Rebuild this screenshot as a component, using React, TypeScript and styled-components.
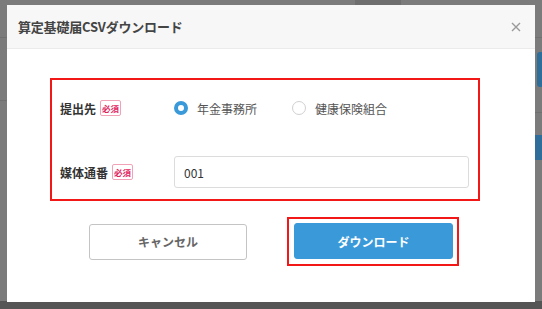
import React from "react";
import styled, { createGlobalStyle } from "styled-components";

const Global = createGlobalStyle`
  html, body { margin: 0; padding: 0; }
  body { font-family: "Noto Sans CJK JP", "Noto Sans", sans-serif; }
  * { box-sizing: border-box; }
`;

const Screen = styled.div`
  position: relative;
  width: 542px;
  height: 309px;
  overflow: hidden;
  background: #7b7b7b;
  padding: 5px 7px 0 7px;
`;

const Deco = styled.div<{ $bg: string }>`
  position: absolute;
  background: ${(p) => p.$bg};
`;

const BottomStrip = styled.div`
  position: absolute;
  left: 0;
  right: 0;
  bottom: 0;
  height: 8px;
  background: #555;
`;

const Modal = styled.div`
  position: relative;
  width: 528px;
  height: 297px;
  background: #fff;
  display: flex;
  flex-direction: column;
`;

const Header = styled.div`
  height: 44px;
  flex: none;
  background: #f7f7f7;
  border-bottom: 1px solid #ebebeb;
  display: flex;
  align-items: center;
  justify-content: space-between;
  padding: 0 14px 0 11px;
`;

const Title = styled.h2`
  margin: 0;
  font-size: 13px;
  font-weight: 700;
  color: #444;
  letter-spacing: -0.2px;
`;

const Close = styled.button`
  border: 0;
  background: none;
  padding: 0;
  width: 10px;
  height: 10px;
  display: flex;
  cursor: pointer;
`;

const Body = styled.div`
  padding: 29px 0 0 43px;
  display: flex;
  flex-direction: column;
`;

const FormBox = styled.div`
  width: 430px;
  border: 2px solid #f21818;
  padding: 12px 9px 11px 8px;
  display: flex;
  flex-direction: column;
  gap: 32px;
`;

const Row = styled.div`
  display: flex;
  align-items: center;
  height: 32px;
`;

const LabelCell = styled.div`
  width: 114px;
  display: flex;
  align-items: center;
  gap: 4px;
`;

const Label = styled.span`
  font-size: 12px;
  font-weight: 700;
  color: #333;
`;

const Badge = styled.span`
  width: 21px;
  height: 16px;
  border: 1px solid #f1a2b6;
  border-radius: 2px;
  color: #e0245e;
  font-size: 8.5px;
  font-weight: 700;
  display: inline-flex;
  align-items: center;
  justify-content: center;
  line-height: 1;
`;

const RadioGroup = styled.div`
  display: flex;
  align-items: center;
  gap: 35px;
`;

const RadioItem = styled.label`
  display: flex;
  align-items: center;
  gap: 9px;
  font-size: 12px;
  color: #555;
  cursor: pointer;
`;

const RadioDot = styled.span<{ $checked?: boolean }>`
  width: 14px;
  height: 14px;
  border-radius: 50%;
  background: #fff;
  border: ${(p) => (p.$checked ? "4px solid #3a9ad9" : "1px solid #d0d0d0")};
`;

const Input = styled.input`
  width: 295px;
  height: 32px;
  border: 1px solid #dcdcdc;
  border-radius: 3px;
  padding: 0 9px;
  font-family: "Noto Sans CJK JP", "Noto Sans", sans-serif;
  font-size: 12px;
  color: #333;
  outline: none;
`;

const Actions = styled.div`
  margin-top: 16px;
  margin-left: 39px;
  display: flex;
  align-items: center;
  gap: 40px;
`;

const Button = styled.button<{ $primary?: boolean }>`
  height: 36px;
  width: ${(p) => (p.$primary ? "159px" : "158px")};
  border-radius: 3px;
  font-family: "Noto Sans CJK JP", "Noto Sans", sans-serif;
  font-size: 12px;
  font-weight: 700;
  cursor: pointer;
  border: ${(p) => (p.$primary ? "1px solid #3a9ad9" : "1px solid #c4c4c4")};
  background: ${(p) => (p.$primary ? "#3a9ad9" : "#fff")};
  color: ${(p) => (p.$primary ? "#fff" : "#666")};
`;

const Highlight = styled.div`
  border: 2px solid #f21818;
  padding: 4px 4px 5px 5px;
  display: flex;
`;

export default function App() {
  return (
    <Screen>
      <Global />
      <Deco $bg="#6e6e6e" style={{ left: 355, top: 0, width: 46, height: 5 }} />
      <Deco $bg="#2f6d9b" style={{ left: 537, top: 52, width: 8, height: 35, borderRadius: 3 }} />
      <Deco $bg="#2f6d9b" style={{ left: 535, top: 135, width: 8, height: 25 }} />
      <Deco $bg="#707070" style={{ left: 0, top: 37, width: 7, height: 1 }} />
      <Deco $bg="#707070" style={{ left: 0, top: 100, width: 7, height: 1 }} />
      <Deco $bg="#707070" style={{ left: 535, top: 37, width: 7, height: 1 }} />
      <Deco $bg="#707070" style={{ left: 535, top: 112, width: 7, height: 1 }} />
      <BottomStrip />
      <Modal>
        <Header>
          <Title>算定基礎届CSVダウンロード</Title>
          <Close aria-label="close">
            <svg width="10" height="10" viewBox="0 0 10 10">
              <path d="M1 1 L9 9 M9 1 L1 9" stroke="#9a9a9a" strokeWidth="1.4" fill="none" />
            </svg>
          </Close>
        </Header>
        <Body>
          <FormBox>
            <Row>
              <LabelCell>
                <Label>提出先</Label>
                <Badge>必須</Badge>
              </LabelCell>
              <RadioGroup>
                <RadioItem>
                  <RadioDot $checked />
                  年金事務所
                </RadioItem>
                <RadioItem>
                  <RadioDot />
                  健康保険組合
                </RadioItem>
              </RadioGroup>
            </Row>
            <Row>
              <LabelCell>
                <Label>媒体通番</Label>
                <Badge>必須</Badge>
              </LabelCell>
              <Input defaultValue="001" />
            </Row>
          </FormBox>
          <Actions>
            <Button>キャンセル</Button>
            <Highlight>
              <Button $primary>ダウンロード</Button>
            </Highlight>
          </Actions>
        </Body>
      </Modal>
    </Screen>
  );
}
